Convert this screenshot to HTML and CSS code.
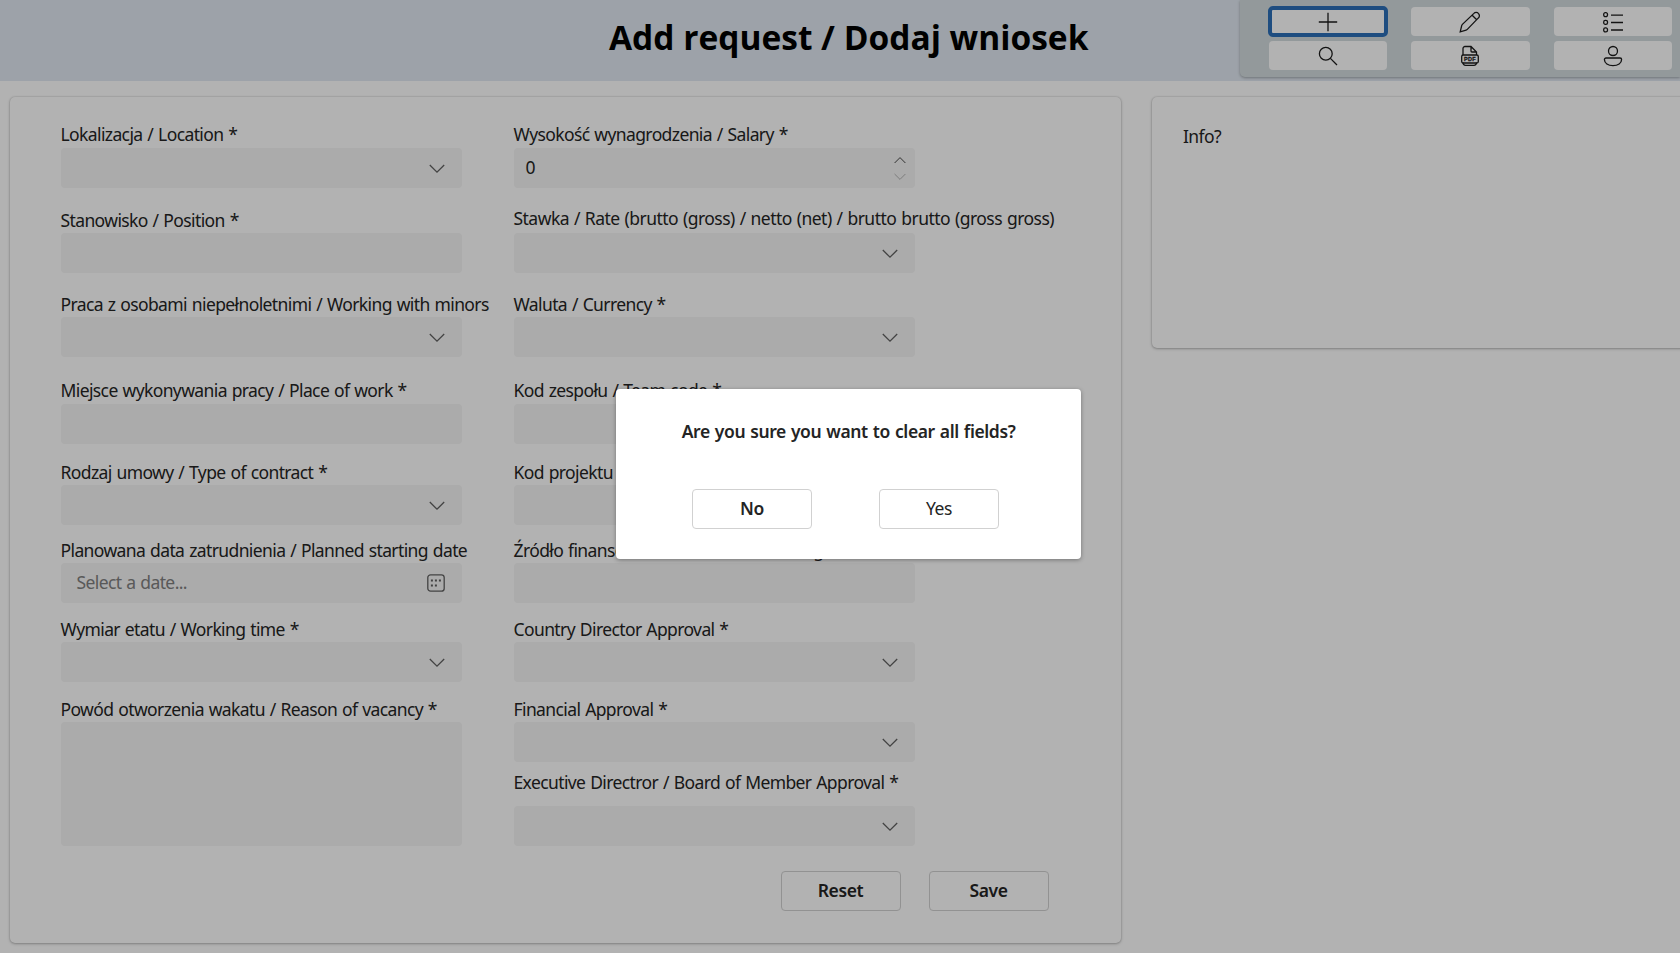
FILE: index.html
```html
<!DOCTYPE html>
<html lang="pl">
<head>
<meta charset="utf-8">
<title>Add request / Dodaj wniosek</title>
<link rel="stylesheet" href="styles.css">
</head>
<body>
<svg class="defs" width="0" height="0">
  <symbol id="chev" viewBox="0 0 16 10"><path d="M.8 1 8 8.2 15.2 1" fill="none" stroke="currentColor" stroke-width="1.3"/></symbol>
</svg>
<header class="top">
  <h1 class="title">Add request / Dodaj wniosek</h1>
  <nav class="tools">
    <button class="tool active"><svg width="20" height="20" viewBox="0 0 20 20"><path d="M10 .8v18.4M.8 10h18.4"/></svg></button>
    <button class="tool"><svg width="22" height="22" viewBox="0 0 22 22"><path d="M1.2 20.800 2.700 14.600Q2.900 13.900 3.400 13.400L14.900 2.400a3.050 3.050 0 0 1 4.500 0 3.050 3.050 0 0 1 0 4.500L8.300 18.400Q7.800 18.900 7.100 19.100zM13.200 4.200l4.500 4.500"/></svg></button>
    <button class="tool"><svg width="22" height="22" viewBox="0 0 22 22"><path d="M9 4.200h12M9 11.500h12M9 19h12"/><rect x="1.700" y="1.700" width="3.800" height="4" rx="1.600"/><rect x="1.700" y="9.300" width="3.800" height="4" rx="1.600"/><rect x="1.700" y="16.900" width="3.800" height="4" rx="1.600"/></svg></button>
    <button class="tool"><svg width="20" height="20" viewBox="0 0 20 20"><circle cx="7.800" cy="7.800" r="6.400"/><path d="m12.400 12.400 6.600 6.600"/></svg></button>
    <button class="tool"><svg width="20" height="22" viewBox="0 0 20 22"><path d="M3 10V3.500a2 2 0 0 1 2-2h6l5.500 5.500v3M11 1.500V6a1 1 0 0 0 1 1h4.500M3 17.500a2.600 2.600 0 0 0 2.600 2.900h8.300a2.600 2.600 0 0 0 2.600-2.900"/><rect x="1.700" y="10" width="16.600" height="8" rx="1.500"/><text class="pdf" x="10" y="16">PDF</text></svg></button>
    <button class="tool"><svg width="20" height="22" viewBox="0 0 20 22"><circle cx="10" cy="6" r="4.500"/><path d="M3 13h14a1.600 1.600 0 0 1 1.600 1.600c0 3.600-3.700 6-8.600 6s-8.600-2.400-8.600-6A1.600 1.600 0 0 1 3 13z"/></svg></button>
  </nav>
</header>
<main class="content">
  <form class="card form">
    <div class="columns">
      <div class="column">
        <div class="field r1"><label>Lokalizacja / Location *</label><div class="input"><svg class="chev"><use href="#chev"/></svg></div></div>
        <div class="field r2"><label>Stanowisko / Position *</label><div class="input"></div></div>
        <div class="field r3"><label>Praca z osobami niepełnoletnimi / Working with minors</label><div class="input"><svg class="chev"><use href="#chev"/></svg></div></div>
        <div class="field r4"><label>Miejsce wykonywania pracy / Place of work *</label><div class="input"></div></div>
        <div class="field r5"><label>Rodzaj umowy / Type of contract *</label><div class="input"><svg class="chev"><use href="#chev"/></svg></div></div>
        <div class="field r6"><label>Planowana data zatrudnienia / Planned starting date</label><div class="input date"><span>Select a date...</span><svg class="cal" width="18" height="18" viewBox="0 0 18 18"><rect x=".8" y=".8" width="16.400" height="16.400" rx="2.800"/><path d="M3.900 6.500h2M7.900 6.500h2M11.900 6.500h2M3.900 11.500h2M7.900 11.500h2"/></svg></div></div>
        <div class="field r7"><label>Wymiar etatu / Working time *</label><div class="input"><svg class="chev"><use href="#chev"/></svg></div></div>
        <div class="field r8"><label>Powód otworzenia wakatu / Reason of vacancy *</label><div class="input area"></div></div>
      </div>
      <div class="column">
        <div class="field r1"><label>Wysokość wynagrodzenia / Salary *</label><div class="input number"><span>0</span><div class="spin"><svg class="up"><use href="#chev"/></svg><svg class="down"><use href="#chev"/></svg></div></div></div>
        <div class="field r2 rate"><label>Stawka / Rate (brutto (gross) / netto (net) / brutto brutto (gross gross)</label><div class="input"><svg class="chev"><use href="#chev"/></svg></div></div>
        <div class="field r3"><label>Waluta / Currency *</label><div class="input"><svg class="chev"><use href="#chev"/></svg></div></div>
        <div class="field r4"><label>Kod zespołu / Team code *</label><div class="input"></div></div>
        <div class="field r5"><label>Kod projektu / Project code *</label><div class="input"></div></div>
        <div class="field r6"><label>Źródło finansowania / Source of funding *</label><div class="input"></div></div>
        <div class="field r7"><label>Country Director Approval *</label><div class="input"><svg class="chev"><use href="#chev"/></svg></div></div>
        <div class="field r8"><label>Financial Approval *</label><div class="input"><svg class="chev"><use href="#chev"/></svg></div></div>
        <div class="field r9"><label>Executive Directror / Board of Member Approval *</label><div class="input"><svg class="chev"><use href="#chev"/></svg></div></div>
      </div>
    </div>
    <div class="actions"><button type="button" class="btn">Reset</button><button type="button" class="btn">Save</button></div>
  </form>
  <aside class="card info">Info?</aside>
</main>
<div class="overlay">
  <section class="dialog">
    <h2>Are you sure you want to clear all fields?</h2>
    <div class="choices"><button class="btn">No</button><button class="btn plain">Yes</button></div>
  </section>
</div>
</body>
</html>
```
FILE: styles.css
```css
* { box-sizing: border-box; }
html, body { height: 100%; overflow: hidden; }
body { margin: 0; background: #fff; color: #242424; font: 17.5px/24px "Noto Sans", "Open Sans", sans-serif; letter-spacing: -0.61px; word-spacing: .9px; }
button { font: inherit; color: inherit; letter-spacing: inherit; padding: 0; }
.defs { position: absolute; }

.top { height: 81px; background: #e1e9f2; display: flex; justify-content: flex-end; }
.title { flex: 1; margin: 0; padding: 13px 0 0 609px; font: 700 33.5px/48px "Open Sans", sans-serif; color: #000; letter-spacing: 0; word-spacing: 0; white-space: nowrap; }
.tools { width: 440px; height: 77px; flex: none; padding: 7px 0 0 28.5px; display: grid; grid-template-columns: repeat(3, 118.5px); grid-auto-rows: 29px; gap: 5px 24px; background: #d3dcdf; border-radius: 0 0 0 5px; box-shadow: 0 1px 3px rgba(0,0,0,.3); }
.tool { display: flex; align-items: center; justify-content: center; border: 0; border-radius: 4px; background: #fff; }
.tool.active { outline: 4px solid #2b6fb8; outline-offset: -3px; }
.tool svg { fill: none; stroke: #1c1c1c; stroke-width: 1.3; }
.tool .pdf { font: 700 5.5px "Liberation Sans", sans-serif; fill: #1c1c1c; stroke: #1c1c1c; stroke-width: .3; text-anchor: middle; letter-spacing: .3px; }

.content { display: flex; align-items: flex-start; gap: 31px; padding: 16px 0 0 10px; }
.card { flex: none; background: #fff; border-radius: 5px; box-shadow: 0 0 2px rgba(0,0,0,.2), 0 1px 3px rgba(0,0,0,.25); }
.form { width: 1111px; height: 846px; padding-left: 50.5px; }
.info { width: 540px; height: 251px; padding: 27px 0 0 31px; }
.columns { display: flex; gap: 51.5px; }
.column { width: 401.5px; height: 748px; }
.field label { display: block; height: 25px; white-space: nowrap; }
.r1 { padding-top: 25px; }
.r2 { padding-top: 20px; }
.r1 label, .r4 label { height: 26px; }
.rate label { margin-top: -2px; margin-bottom: 2px; letter-spacing: -0.53px; }
.r3 { padding-top: 19px; }
.r4 { padding-top: 21px; }
.r5 { padding-top: 16px; }
.r6 { padding-top: 13px; }
.r7 { padding-top: 14px; }
.r8 { padding-top: 15px; }
.r9 { padding-top: 8px; }
.r9 label { height: 36px; }
.input { height: 40px; border-radius: 4px; background: #f5f5f5; display: flex; align-items: center; justify-content: flex-end; padding-right: 17px; }
.area { height: 124px; }
.chev { width: 16px; height: 10px; margin-top: 1px; color: #616161; }
.date, .number { justify-content: space-between; }
.input span { margin-top: -2px; }
.date { padding-left: 16px; color: #808080; }
.cal { fill: none; stroke: #616161; stroke-width: 1.3; }
.cal path { stroke-width: 2; }
.number { padding-left: 12px; padding-right: 9px; }
.spin { display: flex; flex-direction: column; gap: 9px; }
.spin svg { width: 12px; height: 8px; color: #404040; }
.spin .up { transform: scaleY(-1); }
.spin .down { color: #b0b0b0; }
.actions { display: flex; gap: 28px; padding: 26px 0 0 720px; }
.btn { width: 120px; height: 40px; padding-bottom: 2px; border: 1px solid #d1d1d1; border-radius: 4px; background: #fff; font-weight: 600; letter-spacing: -0.4px; }
.btn.plain { font-weight: 400; }

.overlay { position: absolute; inset: 0; background: rgba(0,0,0,.3); }
.dialog { width: 465px; height: 170px; margin: 388.5px 0 0 616px; padding-top: 30px; background: #fff; border-radius: 4px; box-shadow: 0 1px 4px rgba(0,0,0,.35); }
.dialog h2 { margin: 0; font-size: 17.5px; line-height: 24px; font-weight: 600; letter-spacing: -0.4px; text-align: center; }
.choices { display: flex; gap: 67px; padding: 46px 0 0 76px; }
```
